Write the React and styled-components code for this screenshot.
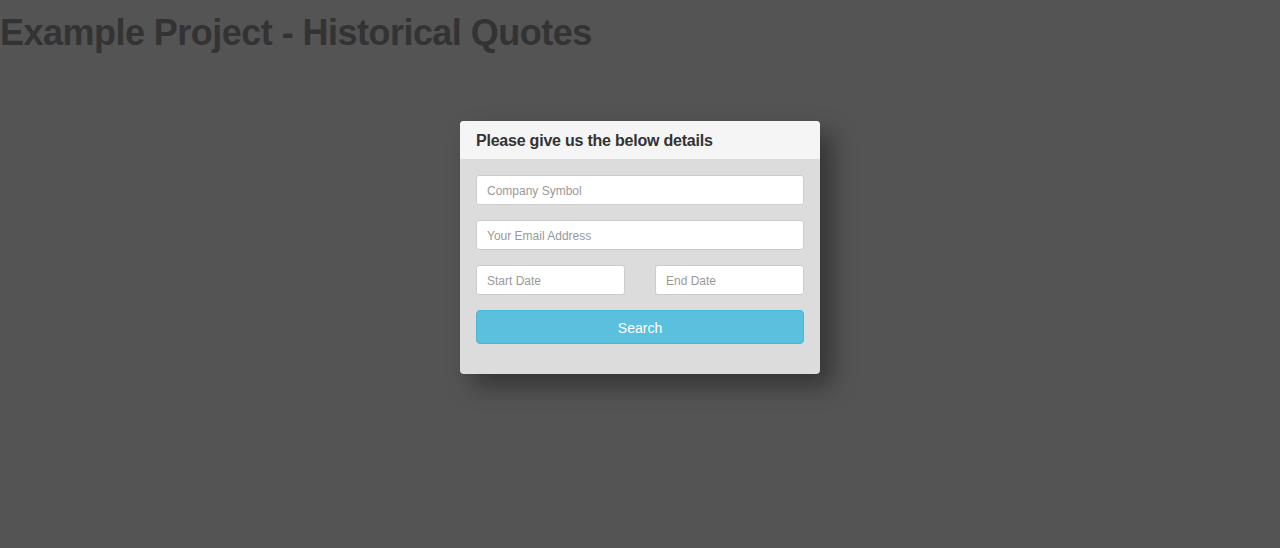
import React from "react";
import styled, { createGlobalStyle } from "styled-components";

const Global = createGlobalStyle`
  html, body { margin: 0; padding: 0; background: #545454; }
  body { font-family: "Liberation Sans", Arial, sans-serif; color: #333; }
  * { box-sizing: border-box; }
`;

const Page = styled.div`
  min-height: 548px;
  background: #545454;
  display: flex;
  flex-direction: column;
`;

const Title = styled.h1`
  margin: 13px 0 0;
  font-size: 36px;
  line-height: 39.6px;
  font-weight: 700;
  color: #333;
  letter-spacing: -0.53px;
`;

const Center = styled.div`
  display: flex;
  justify-content: center;
  padding-top: 68px;
`;

const Panel = styled.div`
  width: 360px;
  background: #dcdcdc;
  border-radius: 4px;
  overflow: hidden;
  box-shadow: 12px 12px 24px rgba(0, 0, 0, 0.38);
`;

const Heading = styled.div`
  background: #f5f5f5;
  height: 38px;
  padding: 2px 16px 0;
  display: flex;
  align-items: center;
  font-size: 16px;
  font-weight: 700;
  color: #333;
  letter-spacing: -0.22px;
`;

const Body = styled.form`
  padding: 16px 16px 30px;
  display: flex;
  flex-direction: column;
  gap: 15px;
`;

const Row = styled.div`
  display: grid;
  grid-template-columns: 149px 149px;
  justify-content: space-between;
`;

const Input = styled.input`
  display: block;
  width: 100%;
  height: 30px;
  padding: 2px 10px 0;
  border: 1px solid #ccc;
  border-radius: 3px;
  background: #fff;
  font-family: "Liberation Sans", Arial, sans-serif;
  font-size: 12px;
  color: #555;
  outline: none;
  &::placeholder { color: #999; }
`;

const Button = styled.button`
  display: block;
  width: 100%;
  height: 34px;
  padding: 2px 0 0;
  border: 1px solid #46b8da;
  border-radius: 4px;
  background: #5bc0de;
  color: #fff;
  font-family: "Liberation Sans", Arial, sans-serif;
  font-size: 14px;
  cursor: pointer;
`;

export default function App() {
  return (
    <Page>
      <Global />
      <Title>Example Project - Historical Quotes</Title>
      <Center>
        <Panel>
          <Heading>Please give us the below details</Heading>
          <Body onSubmit={(e) => e.preventDefault()}>
            <Input placeholder="Company Symbol" />
            <Input placeholder="Your Email Address" />
            <Row>
              <Input placeholder="Start Date" />
              <Input placeholder="End Date" />
            </Row>
            <Button type="submit">Search</Button>
          </Body>
        </Panel>
      </Center>
    </Page>
  );
}
